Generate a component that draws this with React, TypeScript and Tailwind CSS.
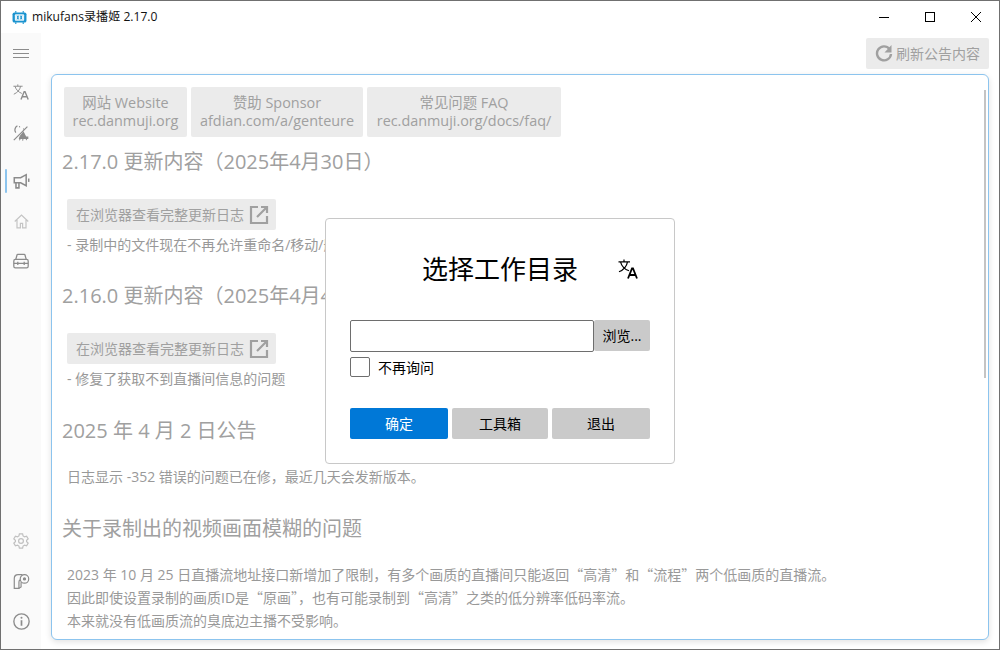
import React from 'react';

const font = { fontFamily: '"Open Sans", "Noto Sans CJK SC", sans-serif' };

const TranslateIcon = ({ className }: { className?: string }) => (
  <svg viewBox="0 0 20 20" fill="none" stroke="currentColor" strokeWidth="1.2" className={className}>
    <path d="M0.500 2.800h11.500M6 0.500v2.300M2.500 2.800c1 3.800 4 7.300 8.500 9M9.500 2.800c-.8 4.500-4 8-8.500 10" />
    <path d="M10 19.500l4-10h1l4 10M11.500 16h6" strokeWidth="1.800" />
  </svg>
);

const MoonOffIcon = ({ className }: { className?: string }) => (
  <svg viewBox="0 0 20 20" fill="none" stroke="currentColor" strokeWidth="1.300" className={className}>
    <path d="M5.500 1C2 3 1.500 7 3.500 9.500" strokeWidth="1.600" />
    <path d="M1 19L18 2" strokeWidth="1.500" />
    <path d="M8 1.500l.5 1.500M13 4.500l.5 1" />
    <path d="M13 9l3 6h2.500v2H8l1-3z" fill="currentColor" />
    <path d="M8 19l1-1.500M12 19.500l.5-2M17 19l-.5-1.500" />
  </svg>
);

const MegaphoneIcon = ({ className }: { className?: string }) => (
  <svg viewBox="0 0 20 20" fill="none" stroke="currentColor" strokeWidth="1.800" className={className}>
    <path d="M1.500 5.500h7.500L15.500 2v13L9 11.500H1.500z" />
    <path d="M3.500 11.500V17.500H7V11.500" />
    <path d="M18.500 6.500v4" />
  </svg>
);

const HomeIcon = ({ className }: { className?: string }) => (
  <svg viewBox="0 0 20 20" fill="none" stroke="currentColor" strokeWidth="1.600" className={className}>
    <path d="M1 10L10 1.500 19 10M4 8v10.500h4.500v-6h3v6H16V8" />
  </svg>
);

const ToolboxIcon = ({ className }: { className?: string }) => (
  <svg viewBox="0 0 20 20" fill="none" stroke="currentColor" strokeWidth="1.600" className={className}>
    <path d="M3.500 8l1.500-5.500c.1-.4.4-.7 1-.7h8c.6 0 .9.300 1 .7L16.500 8" />
    <rect x="1" y="8" width="18" height="10.500" rx="2" />
    <path d="M1 13h18M6 11v4M14 11v4" />
  </svg>
);

const GearIcon = ({ className }: { className?: string }) => (
  <svg viewBox="0 0 20 20" fill="none" stroke="currentColor" strokeWidth="1.500" className={className}>
    <circle cx="10" cy="10" r="3" />
    <path d="M8 1h4l.6 2.700 1.800 1 2.600-.8 2 3.400-2 1.900v1.600l2 1.900-2 3.400-2.600-.8-1.800 1L12 19H8l-.6-2.700-1.800-1-2.600.8-2-3.400 2-1.900V9.200l-2-1.900 2-3.400 2.600.8 1.800-1z" />
  </svg>
);

const SponsorIcon = ({ className }: { className?: string }) => (
  <svg viewBox="0 0 20 20" fill="none" stroke="currentColor" strokeWidth="1.400" className={className}>
    <path d="M11 2H6C3.200 2 1.500 4 1.500 6.500V18H7v-7.500c0-1 .5-2 1.500-2.500" />
    <path d="M7 18l2.500-1.500V11" />
    <circle cx="13.500" cy="7" r="5" />
    <circle cx="13.500" cy="7" r="1.200" fill="currentColor" />
  </svg>
);

const InfoIcon = ({ className }: { className?: string }) => (
  <svg viewBox="0 0 20 20" fill="none" stroke="currentColor" strokeWidth="1.600" className={className}>
    <circle cx="10" cy="10" r="9" />
    <path d="M10 8.500v6.500" strokeWidth="2" />
    <circle cx="10" cy="5.700" r="1.200" fill="currentColor" stroke="none" />
  </svg>
);

const ExternalIcon = () => (
  <svg viewBox="0 0 20 20" fill="none" stroke="#a0a0a0" strokeWidth="2.200" className="w-[20px] h-[20px]">
    <path d="M9 2H2v16h16v-7" />
    <path d="M8 12L18 2M12 2h6v6" />
  </svg>
);

const RefreshIcon = () => (
  <svg viewBox="0 0 18 18" fill="none" className="w-[18px] h-[18px] -translate-y-px">
    <path d="M14.500 5A7 7 0 1 0 16 10" stroke="#a0a0a0" strokeWidth="2.400" />
    <path d="M16.500 1V8.500H9.500z" fill="#a0a0a0" />
  </svg>
);

const Q = ({ children }: { children: React.ReactNode }) => (
  <span className="font-['Noto_Sans_CJK_SC']">{children}</span>
);

const LinkButton = ({ top, bottom, width }: { top: string; bottom: string; width: string }) => (
  <div className={`flex flex-col items-center justify-center h-[50px] rounded-[2px] bg-[#ebebeb] text-[14.400px] leading-[18px] text-[#a0a0a0] ${width}`}>
    <span>{top}</span>
    <span>{bottom}</span>
  </div>
);

const ChangelogButton = () => (
  <div className="flex items-center w-[209px] h-[31px] ml-[5px] pl-[9px] gap-[5px] rounded-[2px] bg-[#ebebeb] text-[14px] text-[#a0a0a0]">
    <span>在浏览器查看完整更新日志</span>
    <ExternalIcon />
  </div>
);

const NavItem = ({ children, active }: { children: React.ReactNode; active?: boolean }) => (
  <div className="relative flex items-center justify-center w-full h-[40px]">
    {active && <span className="absolute left-[4px] top-[8px] w-[2px] h-[24px] rounded-full bg-[#8cc4ee]" />}
    {children}
  </div>
);

export default function App() {
  return (
    <div
      style={font}
      className="relative flex flex-col w-[1000px] h-[650px] overflow-hidden bg-white border border-[#707070]"
    >
      {/* Title bar */}
      <div className="flex items-center shrink-0 h-[32px] pl-[11px] bg-white">
        <svg viewBox="0 0 16 14" className="w-[15px] h-[13px] mr-[5px]">
          <path d="M4 0v2M12 0v2M4 12v2M12 12v2" stroke="#1a93cf" strokeWidth="1.200" />
          <rect x="0.500" y="1.500" width="15" height="11" rx="2" fill="#1a93cf" />
          <rect x="3" y="3.500" width="10" height="7" rx="1" fill="#e6f4fb" />
          <path d="M5.500 5l1.500 4M7 5L5.500 9M9 5l1.500 4M10.500 5L9 9" stroke="#1a93cf" strokeWidth="1" />
        </svg>
        <span className="text-[12.100px] text-[#111]">mikufans录播姬 2.17.0</span>
        <div className="ml-auto flex items-center h-full">
          <div className="flex items-center justify-center w-[46px] h-full">
            <span className="w-[10px] h-px bg-black" />
          </div>
          <div className="flex items-center justify-center w-[46px] h-full">
            <span className="w-[10px] h-[10px] border border-black" />
          </div>
          <div className="flex items-center justify-center w-[46px] h-full">
            <svg viewBox="0 0 10 10" className="w-[10px] h-[10px]" stroke="#000" strokeWidth="1">
              <path d="M0 0l10 10M10 0L0 10" />
            </svg>
          </div>
        </div>
      </div>

      <div className="flex flex-1 min-h-0">
        {/* Sidebar */}
        <div className="flex flex-col items-center shrink-0 w-[40px] h-full pb-[8px] bg-[#fafafa] text-[#8c8c8c]">
          <NavItem>
            <span className="flex flex-col gap-[3px]">
              <span className="block w-[16px] h-px bg-[#8c8c8c]" />
              <span className="block w-[16px] h-px bg-[#8c8c8c]" />
              <span className="block w-[16px] h-px bg-[#8c8c8c]" />
            </span>
          </NavItem>
          <NavItem><TranslateIcon className="w-[16px] h-[16px] -translate-y-px" /></NavItem>
          <NavItem><MoonOffIcon className="w-[16px] h-[16px]" /></NavItem>
          <div className="h-[8px]" />
          <NavItem active><MegaphoneIcon className="w-[17px] h-[17px]" /></NavItem>
          <NavItem><HomeIcon className="w-[15px] h-[15px] text-[#c4c4c4]" /></NavItem>
          <NavItem><ToolboxIcon className="w-[16px] h-[16px]" /></NavItem>
          <div className="flex-1" />
          <NavItem><GearIcon className="w-[16px] h-[16px] text-[#c0c0c0]" /></NavItem>
          <NavItem><SponsorIcon className="w-[17px] h-[17px]" /></NavItem>
          <NavItem><InfoIcon className="w-[17px] h-[17px]" /></NavItem>
        </div>

        {/* Main */}
        <div className="flex flex-col flex-1 min-w-0 pl-[10px] pr-[10px] pb-[9px]">
          <div className="flex justify-end shrink-0 h-[41px] pt-[5px]">
            <div className="flex items-center justify-center w-[123px] h-[31px] gap-[3px] rounded-[2px] bg-[#ebebeb] text-[14px] text-[#a0a0a0]">
              <RefreshIcon />
              <span>刷新公告内容</span>
            </div>
          </div>

          <div className="relative flex-1 min-h-0 overflow-hidden rounded-[6px] border border-[#8cc4ee] bg-white shadow-[0_2px_6px_rgba(0,0,0,0.12)] pl-[10px] pt-[12px] text-[#999999]">
            <span className="absolute right-[2px] top-[15px] w-[2px] h-[288px] bg-[#c4c4c4]" />
            <div className="flex gap-[4px] pl-[2px]">
              <LinkButton top="网站 Website" bottom="rec.danmuji.org" width="w-[123px]" />
              <LinkButton top="赞助 Sponsor" bottom="afdian.com/a/genteure" width="w-[172px]" />
              <LinkButton top="常见问题 FAQ" bottom="rec.danmuji.org/docs/faq/" width="w-[194px]" />
            </div>

            <h2 className="mt-[9px] text-[20px] leading-[32px] text-[#a0a0a0]">2.17.0 更新内容（2025年4月30日）</h2>
            <div className="mt-[21px]"><ChangelogButton /></div>
            <p className="mt-[5px] ml-[5px] text-[14px] leading-[20px]">- 录制中的文件现在不再允许重命名/移动/删除</p>

            <h2 className="mt-[25px] text-[20px] leading-[32px] text-[#a0a0a0]">2.16.0 更新内容（2025年4月4日）</h2>
            <div className="mt-[21px]"><ChangelogButton /></div>
            <p className="mt-[5px] ml-[5px] text-[14px] leading-[20px]">- 修复了获取不到直播间信息的问题</p>

            <h2 className="mt-[26px] text-[20px] leading-[32px] text-[#a0a0a0]">2025 年 4 月 2 日公告</h2>
            <p className="mt-[20px] ml-[5px] text-[14px] leading-[20px]">日志显示 -352 错误的问题已在修，最近几天会发新版本。</p>

            <h2 className="mt-[26px] text-[20px] leading-[32px] text-[#a0a0a0]">关于录制出的视频画面模糊的问题</h2>
            <div className="mt-[18px] ml-[5px] text-[14px] leading-[23px]">
              <p>2023 年 10 月 25 日直播流地址接口新增加了限制，有多个画质的直播间只能返回<Q>“高清”</Q>和<Q>“流程”</Q>两个低画质的直播流。</p>
              <p>因此即使设置录制的画质ID是<Q>“原画”</Q>，也有可能录制到<Q>“高清”</Q>之类的低分辨率低码率流。</p>
              <p>本来就没有低画质流的臭底边主播不受影响。</p>
            </div>
          </div>
        </div>
      </div>

      {/* Dialog */}
      <div className="absolute left-[324px] top-[217px] w-[350px] h-[246px] px-[24px] rounded-[4px] border border-[#c8c8c8] bg-white text-black">
        <div className="relative flex items-center justify-center h-[101px]">
          <span className="text-[26px]">选择工作目录</span>
          <TranslateIcon className="absolute right-[12px] top-[40px] w-[20px] h-[20px]" />
        </div>
        <div className="flex items-start">
          <div className="w-[244px] h-[32px] rounded-[2px] border border-[#6e6e6e]" />
          <div className="flex items-center justify-center flex-1 h-[31px] rounded-[2px] bg-[#cacaca] text-[14px]">浏览...</div>
        </div>
        <div className="flex items-center mt-[5px] h-[20px] gap-[8px]">
          <span className="w-[20px] h-[20px] rounded-[2px] border border-[#6e6e6e]" />
          <span className="text-[14px]">不再询问</span>
        </div>
        <div className="flex mt-[31px] gap-[4px] text-[14px]">
          <div className="flex items-center justify-center w-[98px] h-[31px] rounded-[2px] bg-[#0078d7] text-white">确定</div>
          <div className="flex items-center justify-center w-[96px] h-[31px] rounded-[2px] bg-[#cacaca]">工具箱</div>
          <div className="flex items-center justify-center w-[98px] h-[31px] rounded-[2px] bg-[#cacaca]">退出</div>
        </div>
      </div>
    </div>
  );
}
